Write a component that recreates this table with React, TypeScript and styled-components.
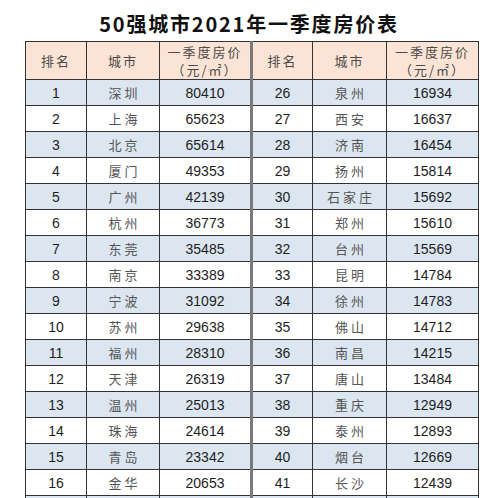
import styled, { createGlobalStyle } from "styled-components";

// 표 데이터
const LEFT_ROWS: [number, string, number][] = [
  [1, "深圳", 80410],
  [2, "上海", 65623],
  [3, "北京", 65614],
  [4, "厦门", 49353],
  [5, "广州", 42139],
  [6, "杭州", 36773],
  [7, "东莞", 35485],
  [8, "南京", 33389],
  [9, "宁波", 31092],
  [10, "苏州", 29638],
  [11, "福州", 28310],
  [12, "天津", 26319],
  [13, "温州", 25013],
  [14, "珠海", 24614],
  [15, "青岛", 23342],
  [16, "金华", 20653],
];

const RIGHT_ROWS: [number, string, number][] = [
  [26, "泉州", 16934],
  [27, "西安", 16637],
  [28, "济南", 16454],
  [29, "扬州", 15814],
  [30, "石家庄", 15692],
  [31, "郑州", 15610],
  [32, "台州", 15569],
  [33, "昆明", 14784],
  [34, "徐州", 14783],
  [35, "佛山", 14712],
  [36, "南昌", 14215],
  [37, "唐山", 13484],
  [38, "重庆", 12949],
  [39, "泰州", 12893],
  [40, "烟台", 12669],
  [41, "长沙", 12439],
];

const GlobalStyle = createGlobalStyle`
  html, body {
    margin: 0;
    padding: 0;
    background: #ffffff;
  }
  body {
    font-family: "Liberation Sans", "Noto Sans CJK SC", sans-serif;
  }
`;

/**
 * @desc 50강 도시 분기 집값 표입니다.
 */
function App(): JSX.Element {
  return (
    <>
      <GlobalStyle />
      <Page>
        <Title>50强城市2021年一季度房价表</Title>
        <Table>
          <colgroup>
            <col style={{ width: 61 }} />
            <col style={{ width: 73 }} />
            <col style={{ width: 92 }} />
            <col style={{ width: 61 }} />
            <col style={{ width: 74 }} />
            <col style={{ width: 92 }} />
          </colgroup>
          <thead>
            <tr>
              {[0, 1].map((g) => (
                <HeadGroup key={g} $split={g === 1} />
              ))}
            </tr>
          </thead>
          <tbody>
            {LEFT_ROWS.map((left, i) => {
              const right = RIGHT_ROWS[i];
              const shaded = i % 2 === 0;
              return (
                <Row key={left[0]} $shaded={shaded}>
                  <NumCell>{left[0]}</NumCell>
                  <CityCell>{left[1]}</CityCell>
                  <NumCell>{left[2]}</NumCell>
                  <NumCell $split>{right[0]}</NumCell>
                  <CityCell>{right[1]}</CityCell>
                  <NumCell>{right[2]}</NumCell>
                </Row>
              );
            })}
            <Row $shaded>
              <NumCell>&nbsp;</NumCell>
              <CityCell />
              <NumCell />
              <NumCell $split />
              <CityCell />
              <NumCell />
            </Row>
          </tbody>
        </Table>
      </Page>
    </>
  );
}

// 머리글 세 칸 묶음
function HeadGroup({ $split }: { $split: boolean }): JSX.Element {
  return (
    <>
      <HeadCell $split={$split}>排名</HeadCell>
      <HeadCell>城市</HeadCell>
      <HeadCell>
        <HeadLine>一季度房价</HeadLine>
        <HeadLine>（元/㎡）</HeadLine>
      </HeadCell>
    </>
  );
}

export default App;

const Page = styled.div`
  width: 498px;
  height: 498px;
  overflow: hidden;
  display: flex;
  flex-direction: column;
  align-items: flex-start;
`;

const Title = styled.h1`
  flex-shrink: 0;
  align-self: stretch;
  margin: 0;
  height: 41px;
  display: flex;
  align-items: center;
  justify-content: center;
  padding-top: 6px;
  box-sizing: border-box;
  font-family: "Noto Sans CJK SC", "Liberation Sans", sans-serif;
  font-weight: 700;
  font-size: 20px;
  letter-spacing: 1.8px;
  color: #111;
`;

const Table = styled.table`
  flex-shrink: 0;
  margin-left: 25px;
  width: 453px;
  border-collapse: collapse;
  table-layout: fixed;
  border: 1.5px solid #2e2e2e;
`;

const HeadCell = styled.th<{ $split?: boolean }>`
  height: 37px;
  padding: 0;
  background: #fbe4d5;
  border: 1px solid #333;
  border-left: ${(p) => (p.$split ? "3px solid #7a7a7a" : "1px solid #333")};
  font-family: "Noto Sans CJK SC", sans-serif;
  font-weight: 400;
  font-size: 13px;
  letter-spacing: 2px;
  color: #4a4a4a;
  text-align: center;
  vertical-align: middle;
  line-height: 18px;
`;

const HeadLine = styled.div`
  white-space: nowrap;
`;

const Row = styled.tr<{ $shaded?: boolean }>`
  height: 26px;
  background: ${(p) => (p.$shaded ? "#dce6f0" : "#ffffff")};
`;

const NumCell = styled.td<{ $split?: boolean }>`
  padding: 0;
  border: 1px solid #333;
  border-left: ${(p) => (p.$split ? "3px solid #7a7a7a" : "1px solid #333")};
  font-family: "Liberation Sans", "Open Sans", sans-serif;
  font-size: 14px;
  color: #1e1e1e;
  text-align: center;
  vertical-align: middle;
`;

const CityCell = styled.td`
  padding: 0;
  border: 1px solid #333;
  font-family: "Noto Sans CJK SC", sans-serif;
  font-weight: 400;
  font-size: 13px;
  letter-spacing: 3px;
  text-indent: 3px;
  color: #555;
  text-align: center;
  vertical-align: middle;
`;
